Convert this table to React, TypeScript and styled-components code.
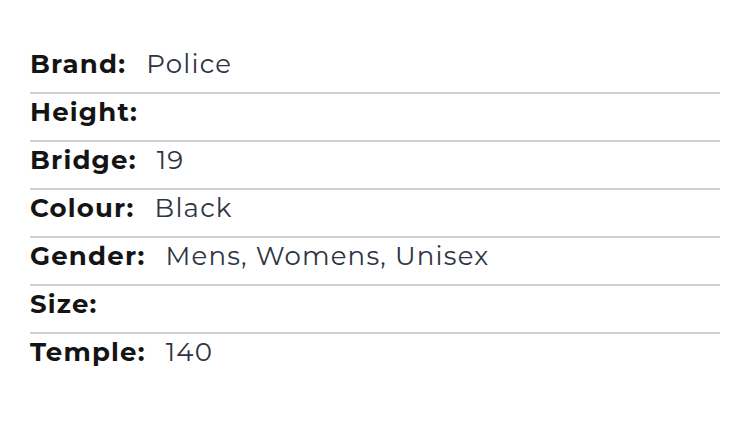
import React from "react";
import styled, { createGlobalStyle } from "styled-components";

const Global = createGlobalStyle`
  html, body { margin: 0; padding: 0; background: #ffffff; }
  body { font-family: "Montserrat", Inter, "Liberation Sans", sans-serif; }
`;

const Table = styled.div`
  padding: 46px 30px 0 30px;
  width: 690px;
`;

const Row = styled.div<{ $last?: boolean }>`
  display: flex;
  align-items: flex-start;
  height: 46px;
  border-bottom: ${(p) => (p.$last ? "none" : "2px solid #d0d0d0")};
  font-size: 26px;
  line-height: 36px;
  letter-spacing: 1.2px;
`;

const Label = styled.span`
  font-weight: 700;
  color: #141414;
  margin-right: 20px;
`;

const Value = styled.span`
  font-weight: 400;
  color: #2e3542;
`;

const rows: [string, string][] = [
  ["Brand:", "Police"],
  ["Height:", ""],
  ["Bridge:", "19"],
  ["Colour:", "Black"],
  ["Gender:", "Mens, Womens, Unisex"],
  ["Size:", ""],
  ["Temple:", "140"],
];

export default function App() {
  return (
    <>
      <Global />
      <Table>
        {rows.map(([l, v], i) => (
          <Row key={l} $last={i === rows.length - 1}>
            <Label>{l}</Label>
            {v && <Value>{v}</Value>}
          </Row>
        ))}
      </Table>
    </>
  );
}
